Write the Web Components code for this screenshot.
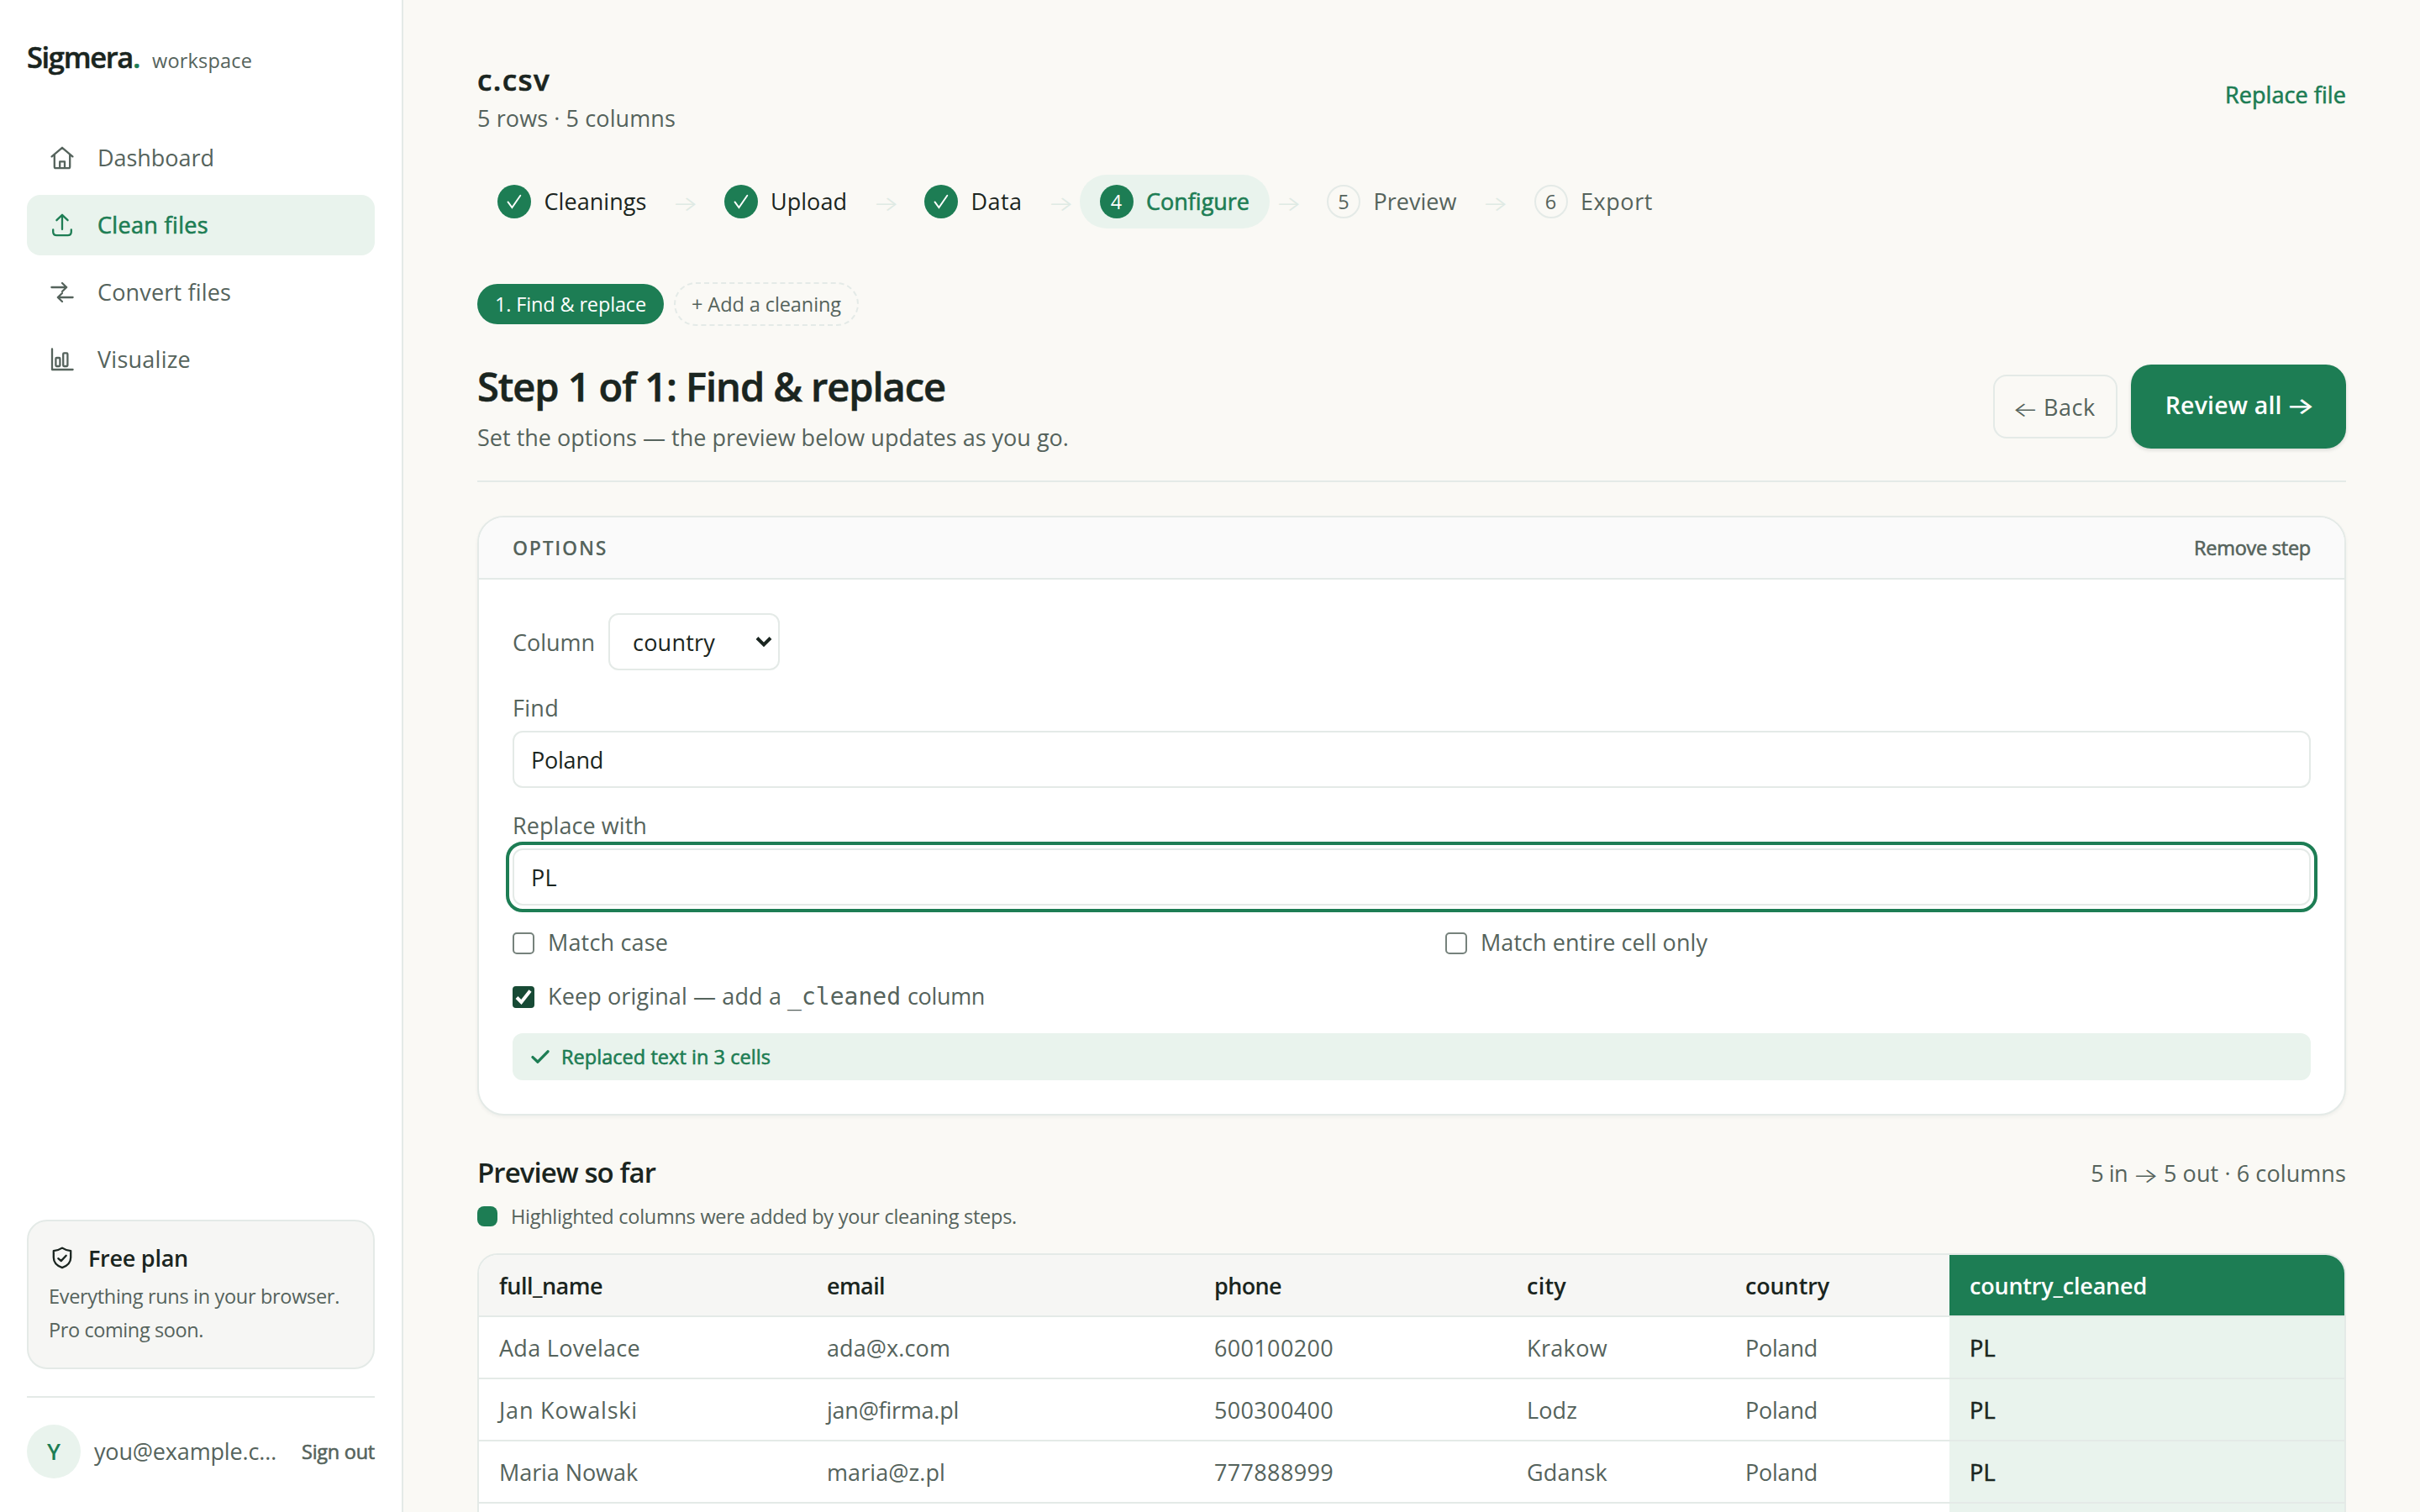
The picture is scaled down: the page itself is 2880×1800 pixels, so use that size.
<!DOCTYPE html>
<html lang="en">
<head>
<meta charset="utf-8">
<title>Sigmera workspace</title>
<style>
:root{--ink:#1a2520;--muted:#55635c;--green:#1d7d54;--mint:#e9f3ed;--line:#e4eae7;--soft:#f6f6f4;--bg:#faf9f5}
html,body{margin:0;height:100%}
body{background:var(--bg);color:var(--muted);font-family:"Open Sans","Noto Sans",sans-serif;overflow:hidden}
</style>
</head>
<body>
<sigmera-app></sigmera-app>
<script>
const define = (name, render) => customElements.define(name, class extends HTMLElement {
  connectedCallback() {
    if (this.shadowRoot) return;
    this.attachShadow({mode: 'open'}).innerHTML = render(this);
  }
});
const attr = (el, n, d = '') => el.hasAttribute(n) ? el.getAttribute(n) : d;

const icons = {
  home: '<path d="M1.6 12.4 14 1.8l12.4 10.6M4.8 10v14.4q0 1.8 1.8 1.8h14.8q1.8 0 1.8-1.8V10M11.2 26v-7.6h5.8V26"/>',
  upload: '<path d="M14 19V1.8M7.4 8.2 14 1.8l6.6 6.4M3.2 19.5V22q0 4.2 4.2 4.2h13.2q4.2 0 4.2-4.2v-2.5"/>',
  swap: '<path d="M1.4 8h17.8M14 3l5.2 5-5.2 5M26.6 20H9M14 15l-5.2 5 5.2 5"/>',
  chart: '<path d="M2 1.4V26h24.6"/><rect x="6.4" y="12" width="5" height="10" rx="1"/><rect x="15.2" y="6.4" width="5.2" height="15.6" rx="1"/>',
  shield: '<path d="M14 2.6q4 2.7 10.2 3.6V14q0 8.4-10.2 12.2Q3.8 22.4 3.8 14V6.2Q10 5.3 14 2.6ZM9.3 15.2l3.4 2.9 6-6.3"/>'
};
define('ui-icon', el => `<style>:host{display:block;width:28px;height:28px;flex:none}svg{display:block}</style>
<svg width="28" height="28" viewBox="0 0 28 28" fill="none" stroke="currentColor" stroke-width="2.3" stroke-linecap="round" stroke-linejoin="round">${icons[attr(el, 'name')]}</svg>`);

define('nav-item', el => `<style>
:host{display:flex;align-items:center;height:72px;padding:0 28px;gap:28px;border-radius:16px}
:host([active]){background:var(--mint);color:var(--green)}
</style><ui-icon name="${attr(el, 'icon')}"></ui-icon><ui-text w="${attr(el, 'w')}" f="${el.hasAttribute('active') ? 500 : 400}"><slot></slot></ui-text>`);

define('app-sidebar', () => `<style>
:host{display:flex;flex-direction:column;box-sizing:border-box;width:480px;height:1800px;flex:none;background:#fff;border-right:2px solid var(--line);padding:0 32px}
.brand{display:flex;align-items:baseline;height:152px;box-sizing:border-box;padding-top:43px;gap:15px}
nav{display:flex;flex-direction:column;gap:8px;flex:1}
.plan{border:2px solid var(--line);border-radius:24px;background:var(--soft);box-sizing:border-box;height:178px;padding:23px 24px 0 24px;margin-bottom:32px}
.plan header{display:flex;align-items:center;gap:17px;padding-left:2px;height:42px;color:var(--ink)}
.plan ui-icon{margin-top:-2px}
.lines{display:flex;flex-direction:column;align-items:flex-start;margin-top:4px}
.user{display:flex;align-items:center;border-top:2px solid var(--line);height:138px;box-sizing:border-box;padding-bottom:8px}
.avatar{width:64px;height:64px;border-radius:50%;background:var(--mint);color:var(--green);display:flex;align-items:center;justify-content:center;margin-right:16px}
.out{margin-left:auto}
</style>
<div class="brand"><ui-text w="134" s="34.5" f="600" b=".5" l="50" c="#1a2520">Sigmera<span style="color:var(--green)">.</span></ui-text><ui-text w="119" s="23.5">workspace</ui-text></div>
<nav><nav-item icon="home" w="139">Dashboard</nav-item><nav-item icon="upload" w="132" active>Clean files</nav-item><nav-item icon="swap" w="159">Convert files</nav-item><nav-item icon="chart" w="111">Visualize</nav-item></nav>
<div class="plan"><header><ui-icon name="shield"></ui-icon><ui-text w="119" f="600">Free plan</ui-text></header>
<div class="lines"><ui-text w="346" s="23.5">Everything runs in your browser.</ui-text><ui-text w="184" s="23.5">Pro coming soon.</ui-text></div></div>
<div class="user"><div class="avatar"><ui-text f="600">Y</ui-text></div><ui-text w="217">you@example.c…</ui-text><ui-text class="out" w="87" s="23.5" f="500">Sign out</ui-text></div>`);

define('step-item', el => {
  const s = attr(el, 'state'), n = attr(el, 'n');
  return `<style>
:host{display:flex;align-items:center;box-sizing:border-box;height:64px;padding:0 24px;gap:15.5px;border-radius:32px}
:host([state=now]){background:var(--mint);color:var(--green)}
:host([state=done]){color:var(--ink)}
.dot{box-sizing:border-box;width:40px;height:40px;border-radius:50%;display:flex;align-items:center;justify-content:center;flex:none}
:host([state=done]) .dot,:host([state=now]) .dot{background:var(--green);color:#fff}
:host([state=next]) .dot{border:2px solid var(--line)}
</style><div class="dot">${s === 'done' ? '<svg width="40" height="40" viewBox="0 0 40 40" fill="none" stroke="currentColor" stroke-width="1.9" stroke-linecap="round"><path d="M12.500 20.400 17.400 27 27.300 12.800"/></svg>' : `<ui-text s="23.5" l="36">${n}</ui-text>`}</div><ui-text w="${attr(el, 'w')}" f="${s === 'now' ? 500 : 400}"><slot></slot></ui-text>`;
});

define('ui-arrow', el => `<style>:host{display:inline-block;font-family:Inter,sans-serif;font-size:${attr(el, 's', '26')}px;font-weight:${attr(el, 'f', '300')};line-height:1;letter-spacing:0;transform:scale(1.25,.95)}</style><slot></slot>`);

define('file-header', () => `<style>
:host{display:flex;justify-content:space-between;align-items:center;height:93px;margin-bottom:46px}
.l{display:flex;flex-direction:column;align-items:flex-start;gap:1px}
</style><div class="l"><ui-text w="87" s="35" f="600" b=".6" l="50" c="#1a2520">c.csv</ui-text><ui-text w="236">5 rows · 5 columns</ui-text></div>
<ui-text w="144" f="500" c="#1d7d54" style="margin-top:-5px">Replace file</ui-text>`);

define('step-track', () => `<style>
:host{display:flex;align-items:center;height:64px;margin-bottom:64px}
i{font-style:normal;display:flex;width:28px;justify-content:center;color:#dfeae4;margin:4px 8px 0}
</style><step-item state="done" w="122">Cleanings</step-item><i><ui-arrow>→</ui-arrow></i><step-item state="done" w="91">Upload</step-item><i><ui-arrow>→</ui-arrow></i><step-item state="done" w="61">Data</step-item><i><ui-arrow>→</ui-arrow></i><step-item state="now" n="4" w="123">Configure</step-item><i><ui-arrow>→</ui-arrow></i><step-item state="next" n="5" w="99">Preview</step-item><i><ui-arrow>→</ui-arrow></i><step-item state="next" n="6" w="86">Export</step-item>`);

define('cleaning-chips', () => `<style>
:host{display:flex;align-items:center;gap:12px;height:52px;margin:0 0 42px}
.a,.b{box-sizing:border-box;display:flex;align-items:center;justify-content:center}
.a{width:222px;height:48px;border-radius:24px;background:var(--green);color:#fff}
.b{width:220px;height:52px;border-radius:26px;border:2px dashed var(--line)}
</style><div class="a"><ui-text w="180" s="23.5">1. Find &amp; replace</ui-text></div><div class="b"><ui-text w="178" s="23.5">+ Add a cleaning</ui-text></div>`);

define('step-heading', () => `<style>
:host{display:flex;justify-content:space-between;align-items:center;height:110px;padding-bottom:32px;border-bottom:2px solid var(--line);margin-bottom:40px}
.l{display:flex;flex-direction:column;align-items:flex-start;gap:12px;padding-top:1px}
.r{display:flex;align-items:center;gap:16px;margin-top:-2px}
.back,.go{box-sizing:border-box;display:flex;align-items:center;justify-content:center;gap:8px}
.back{width:148px;height:76px;border:2px solid var(--line);border-radius:16px;gap:9px;padding-top:1px}
.go{width:256px;height:100px;border-radius:24px;background:var(--green);color:#fff;box-shadow:0 2px 4px rgba(26,37,32,.14);padding-bottom:5px}
.back ui-arrow,.go ui-arrow{margin-top:4px}
</style><div class="l"><ui-text w="557" s="47" f="600" b=".6" l="58" c="#1a2520">Step 1 of 1: Find &amp; replace</ui-text><ui-text w="704">Set the options — the preview below updates as you go.</ui-text></div>
<div class="r"><div class="back"><ui-arrow>←</ui-arrow><ui-text w="62">Back</ui-text></div><div class="go"><ui-text w="139" s="28.500" f="600">Review all</ui-text><ui-arrow s="29" f="500">→</ui-arrow></div></div>`);

define('text-field', el => `<style>
:host{display:flex;flex-direction:column;align-items:flex-start;gap:8px}
.box{box-sizing:border-box;width:100%;height:68px;border:2px solid var(--line);border-radius:12px;background:#fff;padding:1px 20px 0;display:flex;align-items:center;color:var(--ink)}
:host([focused]) .box{outline:4px solid var(--green);outline-offset:4px}
</style><ui-text w="${attr(el, 'w')}" style="padding-top:1px;margin-bottom:-1px">${attr(el, 'label')}</ui-text><div class="box"><ui-text w="${attr(el, 'vw')}"><slot></slot></ui-text></div>`);

define('check-option', el => `<style>
:host{display:flex;align-items:center;gap:16px;height:42px}
.box{box-sizing:border-box;width:26px;height:26px;border:2px solid #76827c;border-radius:5px;flex:none}
svg{display:block;flex:none}
.t{display:flex;align-items:center;margin-top:-2px}
</style>${el.hasAttribute('checked') ? '<svg width="26" height="26" viewBox="0 0 26 26"><rect width="26" height="26" rx="4" fill="#174a35"/><path d="M5 13.500 10.400 19 21 5.500" fill="none" stroke="#fff" stroke-width="4"/></svg>' : '<div class="box"></div>'}<div class="t"><slot></slot></div>`);

define('options-card', () => `<style>
:host{display:block;box-sizing:border-box;height:714px;border:2px solid var(--line);border-radius:32px;background:#fff;overflow:hidden;box-shadow:0 2px 4px rgba(26,37,32,.05);margin-bottom:44px}
header{display:flex;align-items:center;justify-content:space-between;height:72px;padding:0 40px;background:#fafafa;border-bottom:2px solid var(--line)}
.body{padding:40px}
.col{display:flex;align-items:center;gap:16px;height:68px;margin-bottom:24px}
.col ui-text{padding-top:1px}
.sel{box-sizing:border-box;width:204px;height:68px;border:2px solid var(--line);border-radius:12px;display:flex;align-items:center;justify-content:space-between;padding:0 7px 0 27px;color:var(--ink)}
text-field{margin-bottom:24px}
.checks{display:grid;grid-template-columns:1fr 1fr;column-gap:80px;margin-bottom:22px}
.note{display:flex;align-items:center;gap:14px;height:56px;border-radius:12px;background:var(--mint);color:var(--green);padding:0 22px;margin-top:22px}
</style><header><ui-text w="113" s="23" f="600">OPTIONS</ui-text><ui-text w="139" s="23.5" f="500">Remove step</ui-text></header>
<div class="body"><div class="col"><ui-text w="98">Column</ui-text><div class="sel"><ui-text w="98">country</ui-text><svg width="20" height="14" viewBox="0 0 20 14" fill="none" stroke="currentColor" stroke-width="4"><path d="M2 2.500 10 10.500 18 2.500"/></svg></div></div>
<text-field label="Find" w="55" vw="86">Poland</text-field><text-field label="Replace with" w="160" vw="31" focused>PL</text-field>
<div class="checks"><check-option><ui-text w="143">Match case</ui-text></check-option><check-option><ui-text w="270">Match entire cell only</ui-text></check-option></div>
<check-option checked><ui-text w="278">Keep original — add a</ui-text><ui-text w="135" s="28" m style="margin:2px 8px 0 7px">_cleaned</ui-text><ui-text w="92">column</ui-text></check-option>
<div class="note"><svg width="22" height="18" viewBox="0 0 22 18" fill="none" stroke="currentColor" stroke-width="3.300" stroke-linecap="round" stroke-linejoin="round"><path d="M2 9.600 8 15.200 20 2.800"/></svg><ui-text w="249" s="23.5" f="500">Replaced text in 3 cells</ui-text></div></div>`);

define('preview-heading', () => `<style>
:host{display:block;margin-bottom:24px}
.t,.r,.k{display:flex;align-items:center}
.t{justify-content:space-between;height:48px;margin-bottom:8px}
.r{gap:9px;margin-top:1px}.r ui-arrow{margin-top:4px}
.k{gap:16px;height:40px}
.sw{width:24px;height:24px;border-radius:8px;background:var(--green)}
</style><div class="t"><ui-text w="212" s="33" f="600" c="#1a2520" l="48">Preview so far</ui-text><div class="r"><ui-text w="44">5 in</ui-text><ui-arrow>→</ui-arrow><ui-text w="217">5 out · 6 columns</ui-text></div></div>
<div class="k"><div class="sw"></div><ui-text w="602" s="23.5">Highlighted columns were added by your cleaning steps.</ui-text></div>`);

const head = [['full_name',123],['email',69],['phone',80],['city',47],['country',100],['country_cleaned',211]];
const rows = [
  [['Ada Lovelace',168],['ada@x.com',147],['600100200',142],['Krakow',96],['Poland',86],['PL',31]],
  [['Jan Kowalski',165],['jan@firma.pl',157],['500300400',142],['Lodz',60],['Poland',86],['PL',31]],
  [['Maria Nowak',165],['maria@z.pl',141],['777888999',142],['Gdansk',96],['Poland',86],['PL',31]]
];
const blank = '<div class="row"><span></span><span></span><span></span><span></span><span></span><span class="new"></span></div>';
define('preview-grid', () => `<style>
:host{display:block;box-sizing:border-box;height:340px;flex:none;border:2px solid var(--line);border-bottom:0;border-radius:24px 24px 0 0;overflow:hidden;background:#fff}
.row{display:grid;grid-template-columns:390px 461px 372px 260px 267px 1fr;height:72px;border-bottom:2px solid var(--line)}
.row>*{display:flex;align-items:center;padding:1px 0 0 24px}
.head{background:var(--soft);color:var(--ink)}
.new{background:var(--mint);color:var(--ink)}
.head .new{background:var(--green);color:#fff}
</style><div class="row head">${head.map(([t, w], i) => `<span class="${i === 5 ? 'new' : ''}"><ui-text w="${w}" f="600">${t}</ui-text></span>`).join('')}</div>
${rows.map(r => `<div class="row">${r.map(([t, w], i) => `<span class="${i === 5 ? 'new' : ''}"><ui-text w="${w}" f="${i === 5 ? 500 : 400}">${t}</ui-text></span>`).join('')}</div>`).join('')}${blank}`);

define('sigmera-app', () => `<style>
:host{display:flex;height:1800px;width:2880px;overflow:hidden}
main{flex:1;box-sizing:border-box;padding:69px 88px 0;height:1800px;overflow:hidden}
</style><app-sidebar></app-sidebar><main><file-header></file-header><step-track></step-track><cleaning-chips></cleaning-chips><step-heading></step-heading><options-card></options-card><preview-heading></preview-heading><preview-grid></preview-grid></main>`);

/* Single-line label: tracks its letters so that the line takes the width given in "w".
   Open Sans has no medium cut here, so weight 500 is the regular one with a fine stroke. */
customElements.define('ui-text', class extends HTMLElement {
  connectedCallback() {
    if (this.shadowRoot) return;
    const a = (n, d) => attr(this, n, d);
    const stroke = a('b', a('f') === '500' ? '.6' : '0');
    this.attachShadow({mode: 'open'}).innerHTML = `<style>:host{display:block;flex:none;white-space:nowrap;font-size:${a('s', '27')}px;line-height:${a('l', '40')}px;font-weight:${a('f', '400')};-webkit-text-stroke:${stroke}px currentColor;${this.hasAttribute('c') ? `color:${a('c')};` : ''}${this.hasAttribute('m') ? 'font-family:"DejaVu Sans Mono",monospace;' : ''}}span{display:inline-block}</style><span><slot></slot></span>`;
    const w = parseFloat(a('w', '0'));
    if (!w) return;
    const span = this.shadowRoot.querySelector('span');
    const slot = this.shadowRoot.querySelector('slot');
    const text = slot.assignedNodes({flatten: true}).map(n => n.textContent).join('');
    const gap = (w - span.getBoundingClientRect().width) / text.length;
    span.style.letterSpacing = gap.toFixed(3) + 'px';
  }
});
</script>
</body>
</html>
